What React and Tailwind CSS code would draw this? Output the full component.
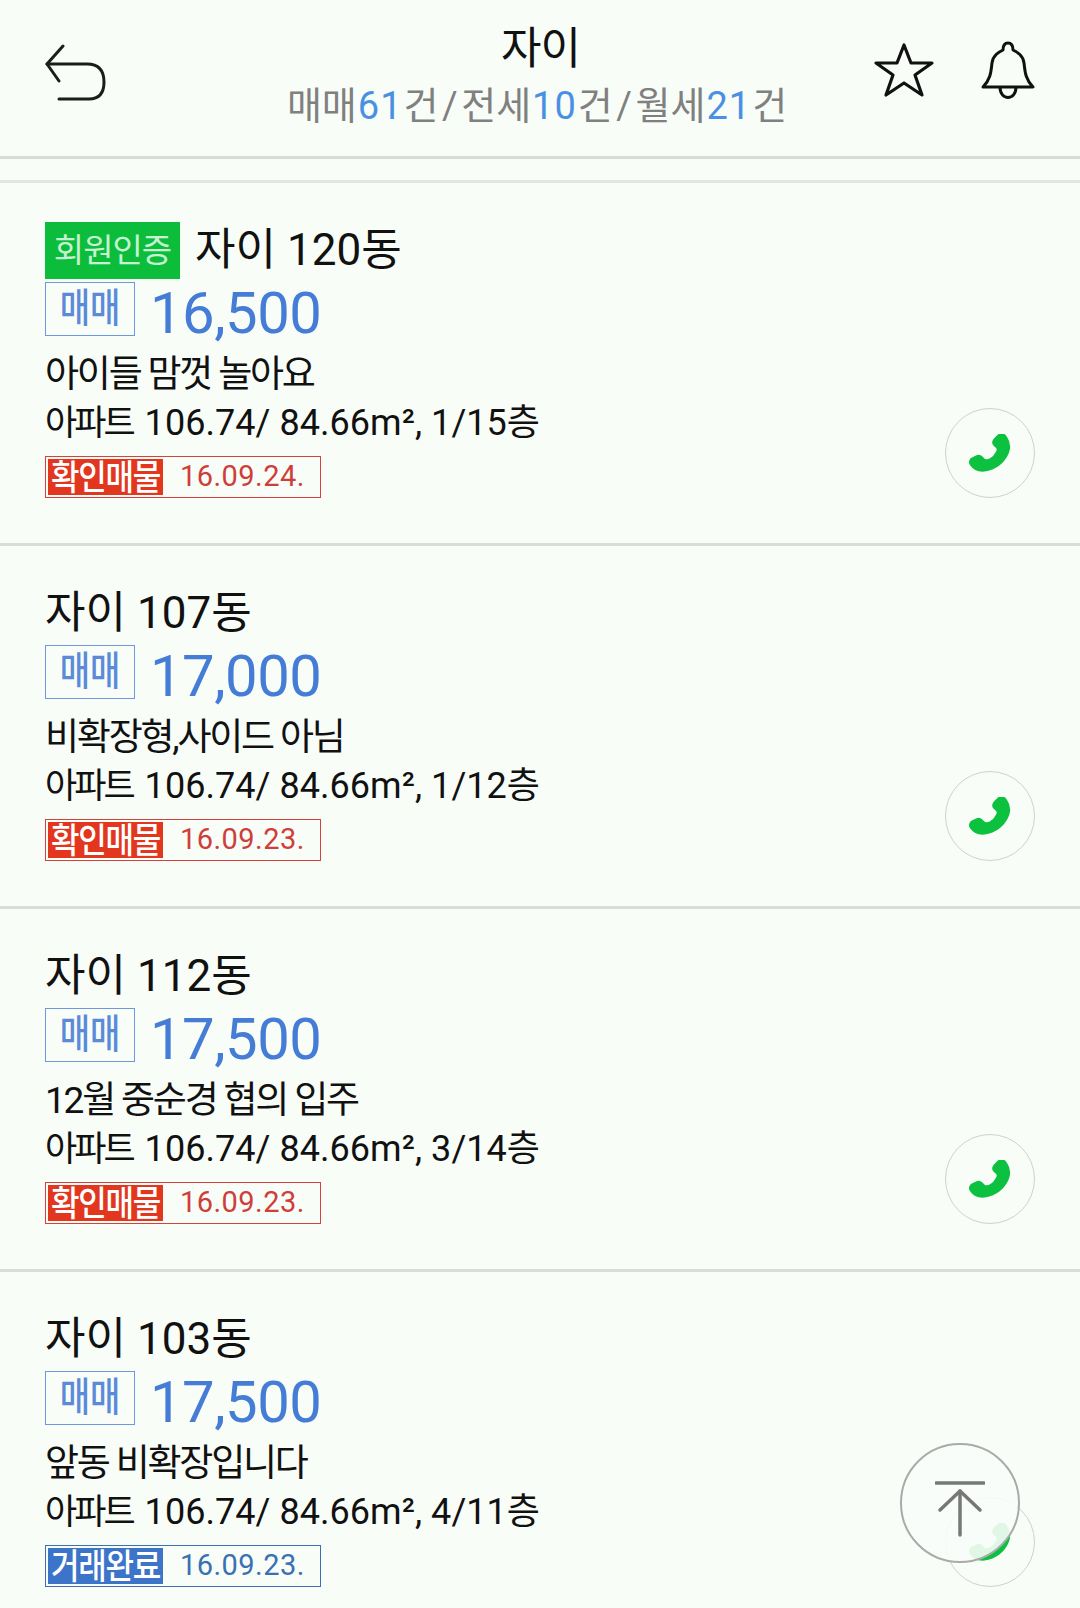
const FONT = "font-['Roboto','Noto_Sans_CJK_KR',sans-serif]";

const items = [
  { verified: true, title: "자이 120동", price: "16,500", desc: "아이들 맘껏 놀아요", spec: "106.74/ 84.66m², 1/15층", status: "확인매물", date: "16.09.24." },
  { title: "자이 107동", price: "17,000", desc: "비확장형,사이드 아님", spec: "106.74/ 84.66m², 1/12층", status: "확인매물", date: "16.09.23." },
  { title: "자이 112동", price: "17,500", desc: "12월 중순경 협의 입주", spec: "106.74/ 84.66m², 3/14층", status: "확인매물", date: "16.09.23." },
  { title: "자이 103동", price: "17,500", desc: "앞동 비확장입니다", spec: "106.74/ 84.66m², 4/11층", status: "거래완료", date: "16.09.23.", done: true },
];

function BackIcon() {
  return (
    <svg className="-mt-[8px]" width="62" height="60" viewBox="0 0 62 60" fill="none" stroke="#1c1c1c" strokeWidth="3" strokeLinecap="round" strokeLinejoin="round">
      <path d="M18 2 L2 20 L14 37" />
      <path d="M2 20 H42 Q59 20 59 38 Q59 55 44 55 H14" />
    </svg>
  );
}

function StarIcon() {
  return (
    <svg width="62" height="58" viewBox="0 0 62 58" fill="none" stroke="#111" strokeWidth="3.2" strokeLinejoin="round">
      <path d="M31 3 L38 21 L59 21 L42 33 L49 53 L31 41 L13 53 L20 33 L3 21 L24 21 Z" />
    </svg>
  );
}

function BellIcon() {
  return (
    <svg width="54" height="60" viewBox="0 0 54 60" fill="none" stroke="#111" strokeWidth="3" strokeLinejoin="round">
      <path d="M2 46 C10 38 10 30 11 22 C12 14 18 11 22 9 C22 4 24 2 27 2 C30 2 32 4 32 9 C36 11 42 14 43 22 C44 30 44 38 52 46 Z" />
      <path d="M19 46 C19 60 35 60 35 46" />
    </svg>
  );
}

function PhoneIcon() {
  return (
    <svg width="42" height="38" viewBox="0 0 40 36" fill="#0cc13f" stroke="#0cc13f" strokeWidth="1.5" strokeLinejoin="round">
      <path d="M28 1 C31 -1 34 0 35.500 3 C39 8 39.500 15 35 22 C30 30 21 35 13 35 C8 35 4 33 1.500 29 C0 27 1 24 3 23 L7 21 C9 20 11 20.500 12.500 22 L14.500 24 C16 25 18 25 20 24 C23 22.500 25 20 26.500 17 C27.500 15 27 13 25.500 12 L24 10.500 C22.500 9 22.500 7 24 5 Z" />
    </svg>
  );
}

function Item({ item, last }) {
  const labelColor = item.done ? "bg-[#3b74c8]" : "bg-[#e2371e]";
  const boxColor = item.done ? "border-[#3b70b4] text-[#3b70b4]" : "border-[#d8403a] text-[#cf3e3a]";
  return (
    <div className={`flex justify-between pl-[45px] pr-[45px] ${last ? "h-[338px]" : "h-[363px] border-b-[3px] border-[#d9dcd8]"}`}>
      <div className="flex flex-col pt-[39px]">
        <div className="flex items-center h-[57px]">
          {item.verified && (
            <span className="flex items-center justify-center w-[135px] h-[57px] mr-[15px] bg-[#0bbd3b] text-[#c4f2d2] text-[33px] tracking-[-1px] whitespace-nowrap">회원인증</span>
          )}
          <span className="text-[44px] leading-[57px] text-[#111] tracking-[0.05px] whitespace-nowrap">{item.title}</span>
        </div>
        <div className="flex items-center h-[54px] mt-[3px]">
          <span className="flex items-center justify-center w-[90px] h-[54px] border-[1.5px] border-[#6f97dc] text-[#5b8bd8] text-[33px] leading-none font-medium">
            <span className="inline-block scale-y-[1.2] -mt-[1px]">매매</span>
          </span>
          <span className="ml-[15px] mt-[7px] text-[58px] leading-none text-[#457cd6] tracking-[-0.5px]">{item.price}</span>
        </div>
        <div className="mt-[14px] h-[50px] text-[37px] leading-[50px] text-[#111] tracking-[-2.2px] whitespace-nowrap">{item.desc}</div>
        <div className="-mt-[1px] h-[48px] text-[36px] leading-[48px] text-[#111] whitespace-nowrap">
          <span className="text-[35px] tracking-[-3px] mr-[12px]">아파트</span>
          <span className="tracking-[0.05px]">{item.spec}</span>
        </div>
        <div className={`mt-[9px] flex items-center w-[276px] h-[42px] border-[1.5px] ${boxColor}`}>
          <span className={`flex items-center justify-center ml-[2px] w-[115px] h-[36px] ${labelColor} text-white text-[31px] tracking-[-1.3px] font-medium leading-none whitespace-nowrap`}>
            <span className="inline-block scale-y-[1.15]">{item.status}</span>
          </span>
          <span className="ml-[17px] -mt-[1px] text-[29px] leading-none tracking-[0.45px]">{item.date}</span>
        </div>
      </div>
      <div className="pt-[225px]">
        <div className="flex items-center justify-center w-[90px] h-[90px] rounded-full border-[1.5px] border-[#cfd2ce]">
          <PhoneIcon />
        </div>
      </div>
    </div>
  );
}

export default function App() {
  return (
    <div className={`relative h-[1608px] w-[1080px] overflow-hidden bg-[#f8fdf8] ${FONT}`}>
      <header className="grid grid-cols-[1fr_auto_1fr] items-center h-[159px] pl-[45px] pr-[45px] border-b-[3px] border-[#d8dbd6]">
        <BackIcon />
        <div className="flex flex-col items-center">
          <div className="text-[44px] leading-[56px] text-[#111] -mt-[4px] ml-[1px] -tracking-[1px]">자이</div>
          <div className="flex text-[38px] leading-[50px] text-[#808080] mt-[4px] mr-[6px]">
            <span>매매</span><span className="text-[#4a90e2] tracking-[1px] mx-[1px]">61</span><span>건</span><span className="mx-[3.5px]">/</span><span>전세</span><span className="text-[#4a90e2] tracking-[1px] mx-[1px]">10</span><span>건</span><span className="mx-[3.5px]">/</span><span>월세</span><span className="text-[#4a90e2] tracking-[1px] mx-[1px]">21</span><span>건</span>
          </div>
        </div>
        <div className="flex items-center justify-end gap-[46px] -mt-[14px]">
          <StarIcon />
          <BellIcon />
        </div>
      </header>
      <div className="h-[24px] border-b-[3px] border-[#e4e6e4]"></div>
      {items.map((item, i) => (
        <Item key={i} item={item} last={i === items.length - 1} />
      ))}
      <button className="absolute left-[900px] top-[1443px] flex items-center justify-center w-[120px] h-[120px] rounded-full border-2 border-[#a9aba9] bg-[#f8fdf8]/90">
        <svg className="mt-[12px]" width="50" height="56" viewBox="0 0 50 56" fill="none" stroke="#777" strokeWidth="3.500" strokeLinecap="round">
          <path d="M1 2 H49" />
          <path d="M25 10 V54" />
          <path d="M5 29 L25 10 L45 29" strokeLinejoin="round" />
        </svg>
      </button>
    </div>
  );
}
